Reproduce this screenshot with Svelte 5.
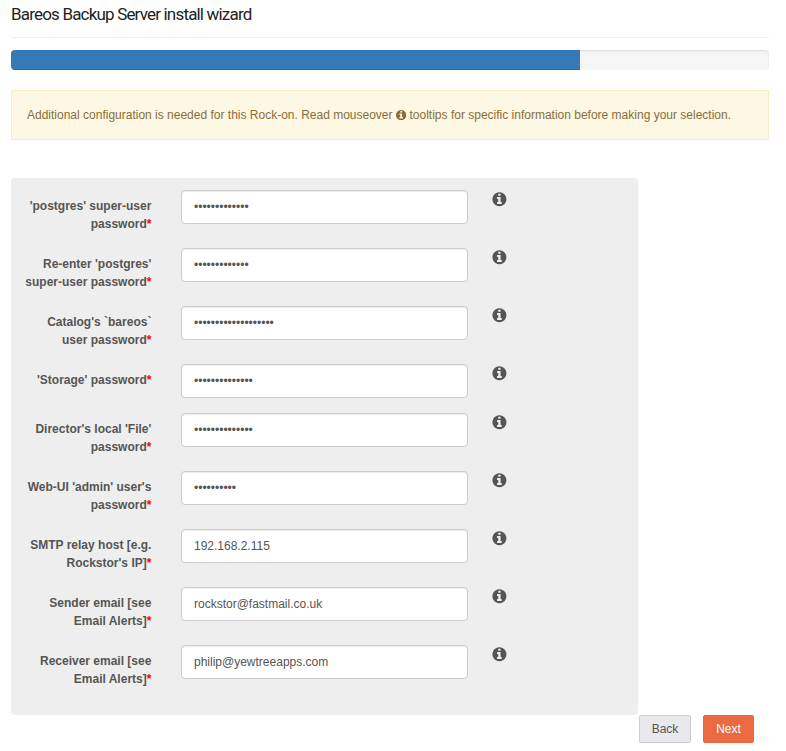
<script>
  const fields = $state([
    { label: "'postgres' super-user password", type: 'password', value: 'postgres-pass' },
    { label: "Re-enter 'postgres' super-user password", type: 'password', value: 'postgres-pass' },
    { label: "Catalog's `bareos` user password", type: 'password', value: 'bareos-catalog-pass' },
    { label: "'Storage' password", type: 'password', value: 'storage-passwd' },
    { label: "Director's local 'File' password", type: 'password', value: 'director-passw' },
    { label: "Web-UI 'admin' user's password", type: 'password', value: 'admin-pass' },
    { label: "SMTP relay host [e.g. Rockstor's IP]", type: 'text', value: '192.168.2.115' },
    { label: 'Sender email [see Email Alerts]', type: 'text', value: 'rockstor@fastmail.co.uk' },
    { label: 'Receiver email [see Email Alerts]', type: 'text', value: 'philip@yewtreeapps.com' }
  ]);
  const progress = 75;
</script>

{#snippet info()}
  <svg class="info" viewBox="0 0 1536 1536" aria-hidden="true">
    <path transform="translate(0 1408) scale(1 -1)" d="M1024 160v160q0 14 -9 23t-23 9h-96v512q0 14 -9 23t-23 9h-320q-14 0 -23 -9t-9 -23v-160q0 -14 9 -23t23 -9h96v-320h-96q-14 0 -23 -9t-9 -23v-160q0 -14 9 -23t23 -9h448q14 0 23 9t9 23zM896 1056v160q0 14 -9 23t-23 9h-192q-14 0 -23 -9t-9 -23v-160q0 -14 9 -23t23 -9h192q14 0 23 9t9 23zM1536 640q0 -209 -103 -385.5t-279.5 -279.5t-385.5 -103t-385.5 103t-279.5 279.5t-103 385.5t103 385.5t279.5 279.5t385.5 103t385.5 -103t279.5 -279.5t103 -385.5z" />
  </svg>
{/snippet}

<div class="wizard">
  <h4>Bareos Backup Server install wizard</h4>
  <div class="progress"><div class="bar" style="width: {progress}%"></div></div>
  <div class="alert">
    Additional configuration is needed for this Rock-on. Read mouseover {@render info()} tooltips for specific information before making your selection.
  </div>
  <form autocomplete="off">
    {#each fields as field, i}
      <div class="row">
        <label for="field-{i}">{field.label}<span class="required">*</span></label>
        <input id="field-{i}" type={field.type} bind:value={field.value} />
        <span class="hint">{@render info()}</span>
      </div>
    {/each}
  </form>
  <div class="actions">
    <button class="back" type="button">Back</button>
    <button class="next" type="button">Next</button>
  </div>
</div>

<style>
  :global(body) {
    background: #fff;
  }
  .wizard, .wizard * {
    box-sizing: border-box;
  }
  .wizard {
    width: 758px;
    margin-left: 11px;
    font: 12px/18px "Liberation Sans", Arial, sans-serif;
    color: #555;
  }
  h4 {
    height: 38px;
    margin: 0 0 12px;
    padding-top: 4px;
    border-bottom: 1px solid #eee;
    font: 400 17px/20px Roboto, sans-serif;
    letter-spacing: -0.82px;
    color: #222;
  }
  .progress {
    height: 20px;
    margin-bottom: 20px;
    overflow: hidden;
    border-radius: 4px;
    background: #f5f5f5;
    box-shadow: inset 0 1px 2px rgba(0, 0, 0, 0.1);
  }
  .bar {
    height: 100%;
    background: #337ab7;
    box-shadow: inset 0 -1px 0 rgba(0, 0, 0, 0.15);
  }
  .alert {
    height: 50px;
    margin-bottom: 38px;
    padding: 15px;
    border: 1px solid #faebcc;
    background: #fcf8e3;
    color: #8a6d3b;
    white-space: nowrap;
  }
  .info {
    fill: currentColor;
  }
  .alert .info {
    width: 10.3px;
    height: 10.3px;
    vertical-align: -1px;
  }
  form {
    width: 627px;
    height: 537px;
    padding: 12px 0 0 13px;
    border-radius: 4px;
    background: #eee;
  }
  .row {
    display: flex;
    align-items: flex-start;
    margin-bottom: 15px;
  }
  label {
    width: 127.4px;
    margin-right: 29.6px;
    padding-top: 7px;
    font-weight: 700;
    text-align: right;
  }
  .required {
    color: #f00;
  }
  input {
    width: 287px;
    height: 34px;
    padding: 6px 12px;
    border: 1px solid #ccc;
    border-radius: 4px;
    outline: 0;
    background: #fff;
    box-shadow: inset 0 1px 1px rgba(0, 0, 0, 0.075);
    font: inherit;
    color: #555;
  }
  .hint {
    display: flex;
    margin: 2px 0 0 24px;
  }
  .hint .info {
    width: 14px;
    height: 14px;
    overflow: visible;
    transform: translate(0.4px, 0.3px);
  }
  .actions {
    display: flex;
    justify-content: flex-end;
    gap: 12px;
    padding-right: 15px;
  }
  button {
    height: 28px;
    padding: 0;
    border: 1px solid #ccc;
    border-radius: 2px;
    font: inherit;
  }
  .back {
    width: 52px;
    background: #e9e8ed;
    color: #555;
  }
  .next {
    width: 51px;
    border-color: #ea6841;
    background: #ec6a43;
    color: #fff;
  }
</style>
